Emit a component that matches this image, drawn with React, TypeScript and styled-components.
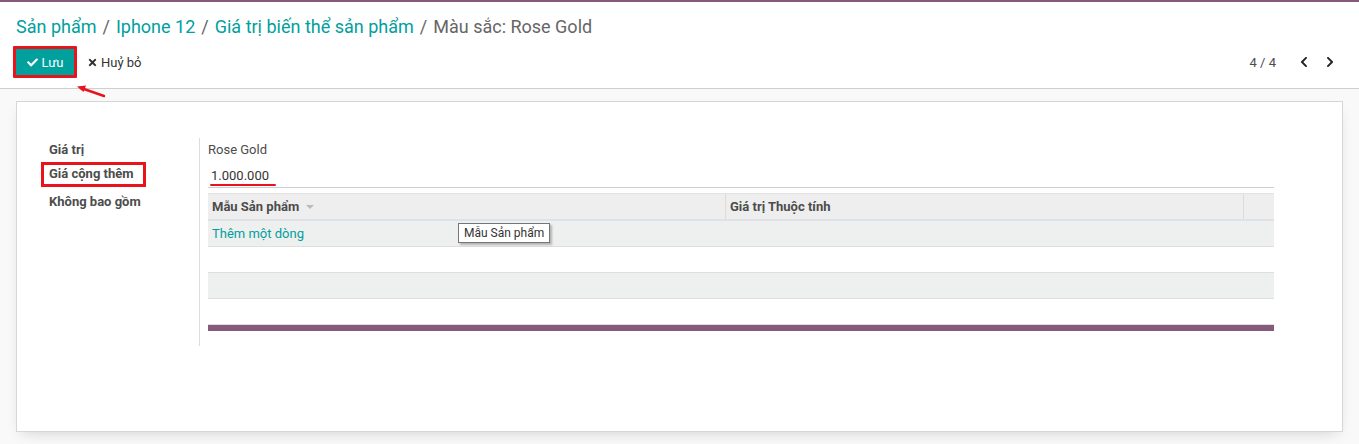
import React from 'react'
import styled, { createGlobalStyle } from 'styled-components'
import { FaCheck, FaTimes, FaChevronLeft, FaChevronRight } from 'react-icons/fa'

const GlobalStyle = createGlobalStyle`
  * { box-sizing: border-box; }
  body {
    margin: 0;
    font-family: Roboto, "Noto Sans", sans-serif;
    font-size: 13px;
    color: #4c4c4c;
    background: #f9f9f9;
  }
`

const crumbs = ['Sản phẩm', 'Iphone 12', 'Giá trị biến thể sản phẩm']

const App = () => {
  return (
    <Page>
      <GlobalStyle />
      <ControlPanel>
        <Breadcrumb>
          {crumbs.map((c) => (
            <React.Fragment key={c}>
              <CrumbLink>{c}</CrumbLink>
              <Sep>/</Sep>
            </React.Fragment>
          ))}
          <CrumbActive>Màu sắc: Rose Gold</CrumbActive>
        </Breadcrumb>
        <ButtonRow>
          <Actions>
            <Highlight>
              <SaveButton>
                <FaCheck size={11} />
                Lưu
              </SaveButton>
              <Arrow width="30" height="14" viewBox="0 0 30 14">
                <path d="M28 12 L5 4" stroke="#e8131b" strokeWidth="2.4" strokeLinecap="round" />
                <path d="M1 2.5 L10 1.5 L7.5 8 Z" fill="#e8131b" />
              </Arrow>
            </Highlight>
            <DiscardButton>
              <FaTimes size={11} />
              Huỷ bỏ
            </DiscardButton>
          </Actions>
          <Pager>
            <PagerValue>4 / 4</PagerValue>
            <PagerButton><FaChevronLeft size={12} /></PagerButton>
            <PagerButton><FaChevronRight size={12} /></PagerButton>
          </Pager>
        </ButtonRow>
      </ControlPanel>

      <Content>
        <Sheet>
          <LabelColumn>
            <Label>Giá trị</Label>
            <Label boxed>Giá cộng thêm</Label>
            <Label gap={7}>Không bao gồm</Label>
          </LabelColumn>
          <FieldColumn>
            <FieldText>Rose Gold</FieldText>
            <InputField>
              <Underlined>1.000.000</Underlined>
            </InputField>
            <Table>
              <HeaderRow>
                <HeadCell>
                  Mẫu Sản phẩm <Caret />
                </HeadCell>
                <HeadCell>Giá trị Thuộc tính</HeadCell>
                <HeadCell narrow />
              </HeaderRow>
              <Row shaded>
                <AddLine>Thêm một dòng</AddLine>
                <Tooltip>Mẫu Sản phẩm</Tooltip>
              </Row>
              <Row />
              <Row shaded />
              <Row />
              <Footer />
            </Table>
          </FieldColumn>
        </Sheet>
      </Content>
    </Page>
  )
}

export default App

const Page = styled.div`
  min-height: 444px;
  border-top: 2px solid #875a7b;
  border-bottom: 1px solid #dcdcdc;
  display: flex;
  flex-direction: column;
`
const ControlPanel = styled.div`
  background: #fff;
  border-bottom: 1px solid #cfcfcf;
  padding: 12px 16px 13px 16px;
`
const Breadcrumb = styled.div`
  display: flex;
  align-items: center;
  height: 26px;
  font-size: 18px;
  line-height: 26px;
`
const CrumbLink = styled.span`
  color: #00a09d;
`
const Sep = styled.span`
  color: #666;
  padding: 0 6px;
`
const CrumbActive = styled.span`
  color: #666;
`
const ButtonRow = styled.div`
  display: flex;
  align-items: center;
  justify-content: space-between;
  margin-top: 9px;
  height: 26px;
`
const Actions = styled.div`
  display: flex;
  align-items: center;
`
const Highlight = styled.div`
  position: relative;
  border: 3px solid #e8131b;
  margin-left: -3px;
  border-radius: 1px;
`
const SaveButton = styled.button`
  display: flex;
  align-items: center;
  gap: 4px;
  height: 26px;
  width: 58px;
  justify-content: center;
  background: #00a09d;
  color: #fff;
  border: 0;
  font-family: Roboto, sans-serif;
  font-size: 13px;
  padding: 0 8px;
`
const Arrow = styled.svg`
  position: absolute;
  left: 60px;
  top: 35px;
`
const DiscardButton = styled.button`
  display: flex;
  align-items: center;
  gap: 3px;
  margin-left: 8px;
  background: none;
  border: 0;
  color: #333;
  font-family: Roboto, sans-serif;
  font-size: 13px;
  padding: 0 2px;
`
const Pager = styled.div`
  display: flex;
  align-items: center;
`
const PagerValue = styled.span`
  color: #4c4c4c;
  margin-right: 15px;
`
const PagerButton = styled.span`
  display: flex;
  align-items: center;
  color: #222;
  padding: 0 7px;
`
const Content = styled.div`
  flex: 1;
  padding: 12px 16px 12px 16px;
`
const Sheet = styled.div`
  background: #fff;
  border: 1px solid #d6d6d6;
  box-shadow: 0 6px 14px -6px rgba(0, 0, 0, 0.18);
  height: 331px;
  padding: 37px 68px 0 32px;
  display: flex;
  align-items: flex-start;
`
const LabelColumn = styled.div`
  width: 150px;
  display: flex;
  flex-direction: column;
  align-items: flex-start;
`
const Label = styled.div<{ boxed?: boolean; gap?: number }>`
  font-weight: 700;
  color: #4c4c4c;
  line-height: 22px;
  margin-top: ${(p) => p.gap || 0}px;
  ${(p) =>
    p.boxed &&
    `
    outline: 3px solid #e8131b;
    margin: 4px 0 0 -5px;
    padding: 0 5px;
    width: 99px;
    height: 19px;
    line-height: 18px;
  `}
`
const FieldColumn = styled.div`
  flex: 1;
  border-left: 1px solid #dcdcdc;
  padding: 0 0 15px 8px;
  margin-top: -1px;
`
const FieldText = styled.div`
  line-height: 22px;
  margin-top: 1px;
`
const InputField = styled.div`
  margin-top: 4px;
  height: 23px;
  line-height: 22px;
  border-bottom: 1px solid #cfcfcf;
  padding-left: 3px;
`
const Underlined = styled.span`
  position: relative;
  color: #333;
  &::after {
    content: '';
    position: absolute;
    left: -1px;
    right: -7px;
    bottom: -3px;
    height: 2.5px;
    border-radius: 2px;
    background: #e8131b;
  }
`
const Table = styled.div`
  margin-top: 5px;
  display: flex;
  flex-direction: column;
`
const HeaderRow = styled.div`
  display: flex;
  height: 28px;
  background: #eeeeee;
  border-top: 1px solid #e2e2e2;
  border-bottom: 2px solid #dee2e6;
`
const HeadCell = styled.div<{ narrow?: boolean }>`
  flex: ${(p) => (p.narrow ? '0 0 31px' : '1')};
  display: flex;
  align-items: center;
  gap: 4px;
  padding: 0 4px;
  font-weight: 700;
  color: #4c4c4c;
  & + & {
    border-left: 1px solid #dcdcdc;
  }
`
const Caret = styled.span`
  width: 0;
  height: 0;
  border-left: 4px solid transparent;
  border-right: 4px solid transparent;
  border-top: 4px solid #bbb;
  margin-left: 3px;
`
const Row = styled.div<{ shaded?: boolean }>`
  position: relative;
  height: 26px;
  display: flex;
  align-items: center;
  padding: 0 4px;
  background: ${(p) => (p.shaded ? '#eeefef' : '#fff')};
  border-bottom: 1px solid #dedede;
`
const AddLine = styled.span`
  color: #00a09d;
`
const Tooltip = styled.div`
  position: absolute;
  left: 250px;
  top: 2px;
  height: 20px;
  padding: 0 5px;
  line-height: 18px;
  font-size: 12px;
  color: #333;
  background: #fff;
  border: 1px solid #767676;
  box-shadow: 2px 2px 2px rgba(0, 0, 0, 0.25);
`
const Footer = styled.div`
  height: 6px;
  background: #875a7b;
`
